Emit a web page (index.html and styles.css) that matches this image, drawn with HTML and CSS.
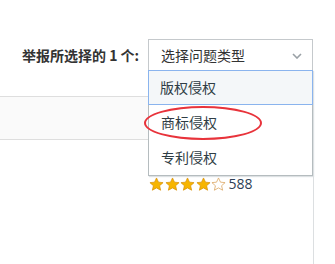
FILE: index.html
```html
<!DOCTYPE html>
<html lang="zh">
<head>
  <meta charset="UTF-8">
  <title>举报</title>
  <link rel="stylesheet" href="styles.css">
</head>
<body>
<div class="report">
  <span class="report-label">举报所选择的 1 个:</span>
  <div class="picker">
    <div class="picker-box">
      <span>选择问题类型</span>
      <svg class="chevron" width="10" height="6" viewBox="0 0 10 6"><path d="M1 1l4 4 4-4" fill="none" stroke="#9aa1a6" stroke-width="1.6"/></svg>
    </div>
    <ul class="picker-menu">
      <li class="active">版权侵权</li>
      <li class="marked">商标侵权</li>
      <li>专利侵权</li>
    </ul>
  </div>
</div>

<div class="panel">
  <div class="panel-head"></div>
  <div class="panel-body">
    <div class="rating">
      <svg class="star" viewBox="0 0 16 16"><path d="M8 1l2.1 4.5 4.9.5-3.7 3.3 1.1 4.8L8 11.6l-4.4 2.5 1.1-4.8L1 6l4.9-.5z" fill="#f7b500" stroke="#d8920a" stroke-width=".8"/></svg>
      <svg class="star" viewBox="0 0 16 16"><path d="M8 1l2.1 4.5 4.9.5-3.7 3.3 1.1 4.8L8 11.6l-4.4 2.5 1.1-4.8L1 6l4.9-.5z" fill="#f7b500" stroke="#d8920a" stroke-width=".8"/></svg>
      <svg class="star" viewBox="0 0 16 16"><path d="M8 1l2.1 4.5 4.9.5-3.7 3.3 1.1 4.8L8 11.6l-4.4 2.5 1.1-4.8L1 6l4.9-.5z" fill="#f7b500" stroke="#d8920a" stroke-width=".8"/></svg>
      <svg class="star" viewBox="0 0 16 16"><path d="M8 1l2.1 4.5 4.9.5-3.7 3.3 1.1 4.8L8 11.6l-4.4 2.5 1.1-4.8L1 6l4.9-.5z" fill="#f7b500" stroke="#d8920a" stroke-width=".8"/></svg>
      <svg class="star" viewBox="0 0 16 16"><path d="M8 1l2.1 4.5 4.9.5-3.7 3.3 1.1 4.8L8 11.6l-4.4 2.5 1.1-4.8L1 6l4.9-.5z" fill="#fff" stroke="#d9a25a" stroke-width=".8"/></svg>
      <span class="count">588</span>
    </div>
  </div>
</div>
</body>
</html>
```

FILE: styles.css
```css
body {
  margin: 0;
  background: #fff;
  font-family: "Noto Sans CJK SC", "Noto Sans", sans-serif;
  color: #333;
  width: 335px;
  height: 264px;
  overflow: hidden;
}
.report {
  display: flex;
  align-items: center;
  padding: 39px 0 0 22px;
  height: 57px;
  align-items: flex-start;
  position: relative;
  z-index: 2;
}
.report-label {
  width: 126px;
  font-size: 14px;
  font-weight: bold;
  line-height: 32px;
  color: #333;
}
.picker {
  position: relative;
  width: 165px;
}
.picker-box {
  display: flex;
  align-items: center;
  justify-content: space-between;
  height: 30px;
  border: 1px solid #c5c9cc;
  padding: 0 10px 0 12px;
  font-size: 14px;
  color: #333;
  background: #fff;
}
.chevron {
  margin-top: 1px;
}
.picker-menu {
  position: absolute;
  top: 31px;
  left: 0;
  width: 163px;
  margin: 0;
  padding: 0;
  list-style: none;
  background: #fff;
  border: 1px solid #b5bcbf;
  border-top: none;
  box-shadow: 1px 1px 1px #dde1e3;
}
.picker-menu li {
  height: 35px;
  line-height: 35px;
  padding-left: 12px;
  font-size: 14px;
  color: #2f3d45;
  position: relative;
}
.picker-menu li.active {
  height: 33px;
  line-height: 33px;
  padding-left: 11px;
  border: 1px solid #8ab4ee;
  margin: 0 -1px 0 -1px;
  background: #f4f7f9;
}
.picker-menu li.marked::after {
  content: "";
  position: absolute;
  left: -5px;
  top: 1px;
  width: 114px;
  height: 30px;
  border: 2px solid #e8333b;
  border-radius: 50%;
}
.panel {
  width: 313px;
  height: 168px;
  border-right: 1px solid #dcdfe1;
}
.panel-head {
  height: 42px;
  background: #fafafa;
  border-top: 1px solid #dedede;
  border-bottom: 1px solid #dedede;
}
.panel-body {
  padding: 37px 0 0 149px;
}
.rating {
  display: flex;
  align-items: center;
  height: 14px;
}
.star {
  width: 15px;
  height: 15px;
  margin-right: 0.5px;
}
.count {
  margin-left: 2px;
  font-family: "Open Sans", "Noto Sans", sans-serif;
  font-size: 14px;
  color: #2c3e55;
  line-height: 14px;
}
```
